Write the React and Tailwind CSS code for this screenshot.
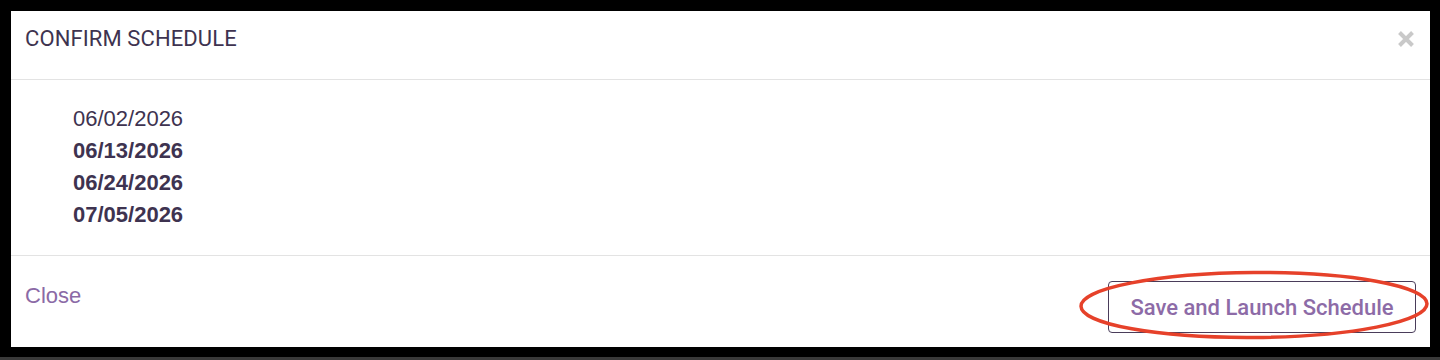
import React from "react";

const dates = [
  { d: "06/02/2026", bold: false },
  { d: "06/13/2026", bold: true },
  { d: "06/24/2026", bold: true },
  { d: "07/05/2026", bold: true },
];

export default function App() {
  return (
    <div className="w-[1440px] h-[360px] bg-black flex flex-col overflow-hidden">
      <div className="relative ml-[11px] mt-[11px] w-[1419px] h-[336px] bg-white flex flex-col">
        {/* header */}
        <div className="h-[69px] flex items-center justify-between pl-[14px] pr-[15px] border-b border-[#e3e3e3] pb-[13px]">
          <h2 className="text-[22px] text-[#3e3350] tracking-[0.1px]" style={{ fontFamily: "Roboto, sans-serif" }}>
            CONFIRM SCHEDULE
          </h2>
          <svg width="18" height="18" viewBox="0 0 18 18">
            <path d="M2.5 2.5 L15.5 15.5 M15.5 2.5 L2.5 15.5" stroke="#c9c9c9" strokeWidth="4" />
          </svg>
        </div>

        {/* body */}
        <div className="h-[176px] border-b border-[#e3e3e3] pl-[62px] pt-[23px]">
          {dates.map((x) => (
            <div
              key={x.d}
              className={`text-[22px] leading-[32px] text-[#3e3350] ${x.bold ? "font-bold" : ""}`}
              style={{ fontFamily: "'Liberation Sans', Arial, sans-serif" }}
            >
              {x.d}
            </div>
          ))}
        </div>

        {/* footer */}
        <div className="flex-1 flex justify-between pl-[14px] pr-[14px]">
          <a className="mt-[27px] text-[22px] leading-[26px] text-[#8b6aa6]" style={{ fontFamily: "'Liberation Sans', Arial, sans-serif" }}>
            Close
          </a>
          <button
            className="mt-[25px] w-[308px] h-[52px] border border-[#4a3d5a] rounded-[4px] text-[22px] font-medium text-[#8d6ba7]"
            style={{ fontFamily: "Roboto, sans-serif" }}
          >
            Save and Launch Schedule
          </button>
        </div>

        {/* red annotation ellipse */}
        <svg className="absolute left-[1066px] top-[257px] pointer-events-none" width="356" height="76" viewBox="0 0 356 76">
          <ellipse cx="177" cy="37" rx="173" ry="32.5" fill="none" stroke="#e6412a" strokeWidth="3.5" transform="rotate(-0.4 177 37)" />
        </svg>
      </div>
      <div className="flex-1" />
      <div className="h-[3px] bg-[#3a3a3a]" />
    </div>
  );
}
